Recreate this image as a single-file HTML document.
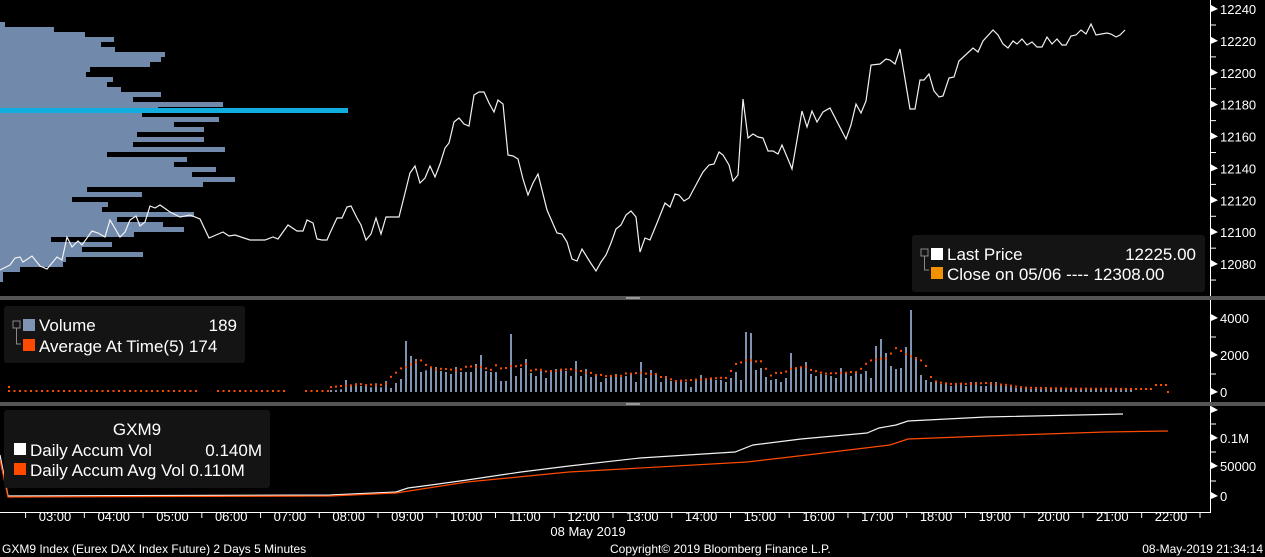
<!DOCTYPE html>
<html><head><meta charset="utf-8"><style>
html,body{margin:0;padding:0;background:#000;width:1265px;height:557px;overflow:hidden}
svg{display:block}
text{font-family:"Liberation Sans",sans-serif;fill:#fff}
.ax{font-size:13px;fill:#fff}
</style></head><body>
<svg id="s" width="1265" height="557" viewBox="0 0 1265 557" xmlns="http://www.w3.org/2000/svg">
<rect width="1265" height="557" fill="#000"/>
<g id="prof"></g>
<rect x="0" y="108" width="348" height="5" fill="#10aede"/>
<polyline fill="none" stroke="#f2f2f2" stroke-width="1.2" points="0,270 10,265 15,258 20,257 23,262 32,256 40,266 47,269 57,257 62,260 67,237 72,247 78,241 82,245 92,231 98,233 105,237 110,220 120,237 125,232 130,220 136,216 140,226 145,222 150,206 155,208 160,205 170,212 180,217 190,215 200,219 209,238 223,232 229,236 235,235 250,240 265,240 273,237 278,239 288,225 297,231 303,231 307,220 313,223 317,239 322,240 327,240 330,233 337,218 342,218 347,207 351,206 357,218 361,225 366,240 371,234 376,218 381,234 386,217 399,217 410,173 415,166 420,183 425,178 430,166 435,177 440,164 445,148 449,143 454,122 459,118 464,124 469,126 474,95 479,92 484,92 489,103 494,112 498,100 503,104 508,155 513,156 518,159 523,179 528,195 533,183 538,174 547,210 557,233 562,234 567,242 572,259 577,261 582,249 590,262 596,271 601,262 606,255 611,243 616,229 621,225 626,215 631,211 636,217 640,252 645,238 650,240 657,223 665,203 670,207 675,194 679,195 684,201 689,198 697,183 703,172 709,165 714,164 719,152 723,155 729,165 733,181 738,175 743,99 748,138 753,134 758,137 763,138 768,151 773,151 778,154 782,145 790,164 792,169 802,111 807,127 812,111 817,122 823,112 830,108 846,139 851,125 856,104 861,113 866,101 871,65 880,64 886,59 890,60 895,64 900,49 910,109 915,109 920,80 924,80 929,74 934,91 939,97 943,96 949,78 954,77 959,61 973,48 978,52 983,41 993,30 998,35 1003,44 1008,48 1013,41 1017,44 1022,39 1027,45 1032,42 1037,47 1042,47 1047,37 1052,44 1057,39 1062,45 1066,45 1071,36 1076,35 1081,30 1086,34 1091,24 1096,35 1107,33 1111,34 1116,37 1120,35 1125,30"/>
<rect x="912" y="235" width="293" height="57" rx="3" fill="#141414"/>
<rect x="921" y="249" width="7" height="7" fill="none" stroke="#888" stroke-width="1"/>
<path d="M924.5 256 V270 H929" fill="none" stroke="#888"/>
<rect x="931" y="248" width="12" height="12" fill="#fff"/>
<rect x="931" y="267" width="12" height="12" fill="#f39200"/>
<text x="947" y="260" font-size="17">Last Price</text>
<text x="1196" y="260" font-size="17" text-anchor="end">12225.00</text>
<text x="947" y="280" font-size="17">Close on 05/06 ---- 12308.00</text>
<rect x="0" y="296" width="1265" height="4" fill="#555"/>
<rect x="626" y="297" width="14" height="2" fill="#999"/>
<rect x="0" y="402" width="1265" height="4" fill="#555"/>
<rect x="626" y="403" width="14" height="2" fill="#999"/>
<g id="vol"></g>
<rect x="4" y="306" width="241" height="57" rx="3" fill="#141414"/>
<rect x="13" y="321" width="7" height="7" fill="none" stroke="#888"/>
<path d="M16.5 328 V344 H21" fill="none" stroke="#888"/>
<rect x="23" y="319" width="12" height="12" fill="#7f93b2"/>
<rect x="23" y="339" width="12" height="12" fill="#ff4a00"/>
<text x="39" y="331" font-size="17">Volume</text>
<text x="237" y="331" font-size="17" text-anchor="end">189</text>
<text x="39" y="352" font-size="17">Average At Time(5) 174</text>
<polyline fill="none" stroke="#f2f2f2" stroke-width="1.2" points="0,455 8,496 330,495 396,492 408,488 431,485 467,480 521,472 569,466 640,458 735,452 753,445 801,439 867,433 879,428 896,425 908,421 986,417 1123,414"/>
<polyline fill="none" stroke="#ff4a00" stroke-width="1.2" points="0,460 8,497 330,496 396,493 467,482 569,472 747,462 807,455 890,445 908,439 986,436 1105,432 1168,431"/>
<rect x="4" y="410" width="266" height="78" rx="3" fill="#141414"/>
<text x="137" y="435" font-size="17" text-anchor="middle">GXM9</text>
<rect x="14" y="443" width="12" height="12" fill="#fff"/>
<rect x="14" y="463" width="12" height="12" fill="#ff4a00"/>
<text x="30" y="456" font-size="17">Daily Accum Vol</text>
<text x="262" y="456" font-size="17" text-anchor="end">0.140M</text>
<text x="30" y="476" font-size="17">Daily Accum Avg Vol 0.110M</text>
<line x1="1210.5" y1="0" x2="1210.5" y2="296" stroke="#fff"/>
<line x1="1210.5" y1="300" x2="1210.5" y2="402" stroke="#fff"/>
<line x1="1210.5" y1="406" x2="1210.5" y2="512" stroke="#fff"/>
<line x1="0" y1="512.5" x2="1211" y2="512.5" stroke="#fff"/>
<g id="axes"></g>
<text x="588" y="536" class="ax" text-anchor="middle">08 May 2019</text>
<text x="2" y="553" font-size="12">GXM9 Index (Eurex DAX Index Future) 2 Days 5 Minutes</text>
<text x="610" y="553" font-size="12">Copyright© 2019 Bloomberg Finance L.P.</text>
<text x="1263" y="553" font-size="12" text-anchor="end">08-May-2019 21:34:14</text>
</svg>
<script>
var NS="http://www.w3.org/2000/svg";
function el(p,t,a){var e=document.createElementNS(NS,t);for(var k in a)e.setAttribute(k,a[k]);document.getElementById(p).appendChild(e);return e;}
var pw=[54,85,114,101,115,165,161,150,90,86,113,107,121,161,133,223,158,142,219,174,204,137,204,133,225,107,187,174,216,192,235,203,87,142,72,108,102,194,117,163,184,134,51,112,82,143,66,63,20,3,3];
for(var i=0;i<pw.length;i++)el("prof","rect",{x:0,y:27+i*5,width:pw[i],height:5,fill:"#7189ab"});
el("prof","rect",{x:0,y:22,width:5,height:5,fill:"#7189ab"});
var tops=[270,270,268,240,255,250,258,258,262,250,
262,243,264,249,237,123,168,177,216,211,204,201,213,216,222,201,216,216,216,192,165,213,216,216,243,243,102,228,204,177,219,228,213,234,210,207,210,213,228,183,228,207,231,222,246,234,228,222,231,228,219,
246,186,234,210,225,246,228,243,246,
243,246,261,237,225,237,234,240,240,246,234,216,240,96,99,210,204,231,240,237,246,234,159,204,204,186,222,228,222,225,228,234,204,216,228,216,222,213,234,138,117,159,198,207,204,141,30,171,225,240,246];
var H=[];
for(var i=0;i<tops.length;i++)H.push((276-tops[i])/3);
var tail=[10,8,8,6,8,8,6,10,10,6,6,10,10,8,6,6,4,4,5,3,4,3,5,3,4,3,3,4,3,3,3,3,3,4,3,3,3,3,3,3];
H=H.concat(tail);
var avg=[];
for(var i=0;i<H.length;i++){var s=0,n=0;for(var j=i-3;j<=i+3;j++)if(j>=0&&j<H.length){s+=H[j];n++;}avg.push(s/n);}
for(var i=0;i<H.length;i++){var x=330+i*5;
el("vol","rect",{x:x,y:(392-H[i]).toFixed(1),width:2,height:H[i].toFixed(1),fill:"#7f93b2"});
el("vol","rect",{x:x,y:(391-avg[i]*1.05).toFixed(1),width:2,height:2,fill:"#ff4a00"});}
for(var x=8;x<330;x+=5.5){if((x>200&&x<212)||(x>283&&x<300))continue;el("vol","rect",{x:x.toFixed(1),y:390,width:2,height:2,fill:"#ff4a00"});}
el("vol","rect",{x:8,y:386,width:2,height:2,fill:"#ff4a00"});
for(var x=1130;x<1166;x+=5){el("vol","rect",{x:x,y:x>1150?384:388,width:2,height:2,fill:"#ff4a00"});}
el("vol","rect",{x:1167,y:391,width:2,height:2,fill:"#ff4a00"});
function tri(y){el("axes","path",{d:"M1211 "+(y-4)+" L1218 "+y+" L1211 "+(y+3)+"Z",fill:"#fff"});}
for(var p=12240;p>=12080;p-=20){var y=9+(12240-p)*1.594;tri(y);var t=el("axes","text",{x:1220,y:y+5,"class":"ax"});t.textContent=p;el("axes","line",{x1:1210,y1:y+16,x2:1216,y2:y+16,stroke:"#fff"});}
var vl=[[318,"4000"],[355,"2000"],[392,"0"]];
vl.forEach(function(v){tri(v[0]);var t=el("axes","text",{x:1220,y:v[0]+5,"class":"ax"});t.textContent=v[1];});
[337,374].forEach(function(y){el("axes","line",{x1:1210,y1:y,x2:1216,y2:y,stroke:"#fff"});});
var al=[[438,"0.1M"],[466,"50000"],[496,"0"]];
tri(410);
al.forEach(function(v){tri(v[0]);var t=el("axes","text",{x:1220,y:v[0]+5,"class":"ax"});t.textContent=v[1];});
[424,452,481].forEach(function(y){el("axes","line",{x1:1210,y1:y,x2:1216,y2:y,stroke:"#fff"});});
for(var h=3;h<=22;h++){var x=55+(h-3)*58.74;var t=el("axes","text",{x:x,y:521,"class":"ax","text-anchor":"middle"});t.textContent=(h<10?"0":"")+h+":00";
el("axes","line",{x1:x-29.4,y1:512,x2:x-29.4,y2:518,stroke:"#fff"});}
el("axes","line",{x1:1200,y1:512,x2:1200,y2:518,stroke:"#fff"});
</script>
</body></html>
